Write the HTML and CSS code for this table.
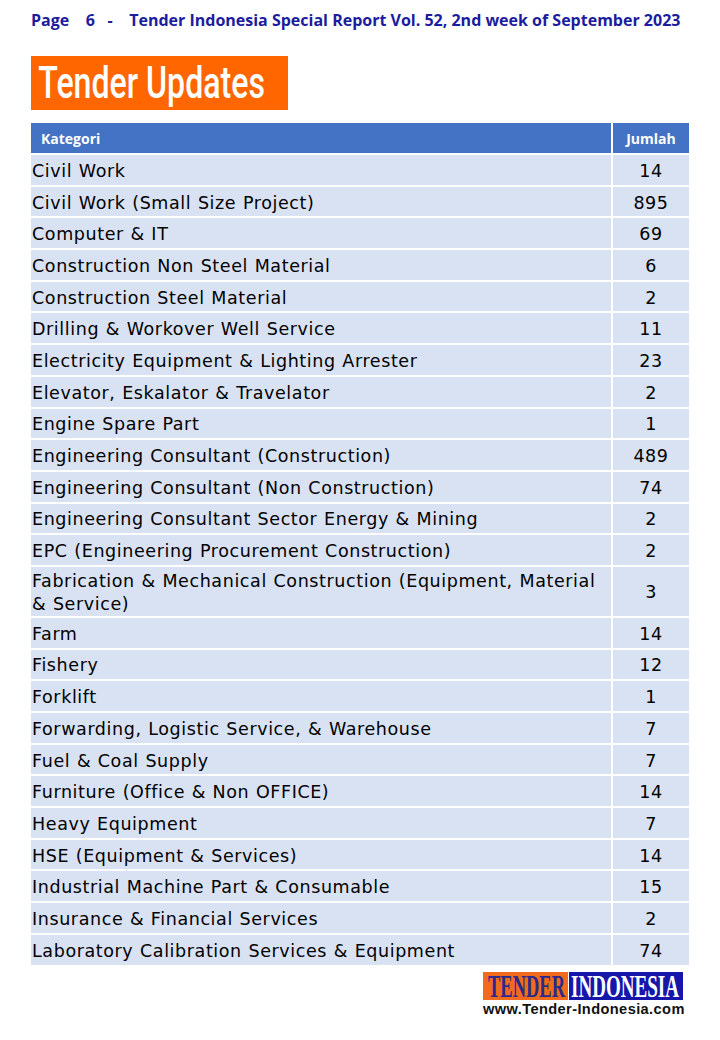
FILE: index.html
```html
<!DOCTYPE html>
<html>
<head>
<meta charset="utf-8">
<link rel="stylesheet" href="styles.css">
</head>
<body>
<div class="page">
  <div class="running-head">Page    6   -    Tender Indonesia Special Report Vol. 52, 2nd week of September 2023</div>
  <div class="title-box"><span class="title">Tender Updates</span></div>
  <table class="tbl">
    <thead>
      <tr><th class="cat">Kategori</th><th class="num">Jumlah</th></tr>
    </thead>
    <tbody>
      <tr><td>Civil Work</td><td class="n">14</td></tr>
      <tr><td>Civil Work (Small Size Project)</td><td class="n">895</td></tr>
      <tr><td>Computer &amp; IT</td><td class="n">69</td></tr>
      <tr><td>Construction Non Steel Material</td><td class="n">6</td></tr>
      <tr><td>Construction Steel Material</td><td class="n">2</td></tr>
      <tr><td>Drilling &amp; Workover Well Service</td><td class="n">11</td></tr>
      <tr><td>Electricity Equipment &amp; Lighting Arrester</td><td class="n">23</td></tr>
      <tr><td>Elevator, Eskalator &amp; Travelator</td><td class="n">2</td></tr>
      <tr><td>Engine Spare Part</td><td class="n">1</td></tr>
      <tr><td>Engineering Consultant (Construction)</td><td class="n">489</td></tr>
      <tr><td>Engineering Consultant (Non Construction)</td><td class="n">74</td></tr>
      <tr><td>Engineering Consultant Sector Energy &amp; Mining</td><td class="n">2</td></tr>
      <tr><td>EPC (Engineering Procurement Construction)</td><td class="n">2</td></tr>
      <tr class="tall"><td>Fabrication &amp; Mechanical Construction (Equipment, Material &amp; Service)</td><td class="n">3</td></tr>
      <tr><td>Farm</td><td class="n">14</td></tr>
      <tr><td>Fishery</td><td class="n">12</td></tr>
      <tr><td>Forklift</td><td class="n">1</td></tr>
      <tr><td>Forwarding, Logistic Service, &amp; Warehouse</td><td class="n">7</td></tr>
      <tr><td>Fuel &amp; Coal Supply</td><td class="n">7</td></tr>
      <tr><td>Furniture (Office &amp; Non OFFICE)</td><td class="n">14</td></tr>
      <tr><td>Heavy Equipment</td><td class="n">7</td></tr>
      <tr><td>HSE (Equipment &amp; Services)</td><td class="n">14</td></tr>
      <tr><td>Industrial Machine Part &amp; Consumable</td><td class="n">15</td></tr>
      <tr><td>Insurance &amp; Financial Services</td><td class="n">2</td></tr>
      <tr><td>Laboratory Calibration Services &amp; Equipment</td><td class="n">74</td></tr>
    </tbody>
  </table>
  <div class="footer">
    <div class="logo">
      <svg class="logo-mark" width="200" height="28" viewBox="0 0 200 28">
        <rect x="0" y="0" width="85" height="28" fill="#f26b1d"/>
        <rect x="86" y="0" width="114" height="28" fill="#1616aa"/>
        <text transform="translate(5,25) scale(1,1.73)" x="0" y="0" textLength="77" lengthAdjust="spacingAndGlyphs" font-family="Liberation Serif, serif" font-weight="700" font-size="18.5" fill="#2a2a8c">TENDER</text>
        <text transform="translate(88,25) scale(1,1.68)" x="0" y="0" textLength="108" lengthAdjust="spacingAndGlyphs" font-family="Liberation Serif, serif" font-weight="700" font-size="19" fill="#ffffff">INDONESIA</text>
      </svg>
      <div class="lg-url">www.Tender-Indonesia.com</div>
    </div>
  </div>
</div>
</body>
</html>
```

FILE: styles.css
```css
html, body {
  margin: 0;
  padding: 0;
  background: #ffffff;
}
.page {
  width: 720px;
  height: 1040px;
  padding: 9px 31px 0 31px;
  box-sizing: border-box;
}
.running-head {
  font-family: "Open Sans", "Liberation Sans", sans-serif;
  font-weight: 700;
  font-size: 16px;
  color: #1c1c9e;
  white-space: pre;
  height: 22px;
  line-height: 22px;
}
.title-box {
  margin-top: 25px;
  width: 257px;
  height: 54px;
  background: #ff6600;
  overflow: hidden;
}
.title {
  display: inline-block;
  font-family: "Roboto", "DejaVu Sans", sans-serif;
  font-weight: 500;
  font-size: 44px;
  line-height: 54px;
  color: #ffffff;
  padding-left: 10px;
  transform: scaleX(0.73);
  transform-origin: left center;
  white-space: nowrap;
}
.tbl {
  margin-top: 13px;
  width: 658px;
  border-collapse: collapse;
  font-family: "DejaVu Sans", Verdana, sans-serif;
}
.tbl th {
  background: #4472c4;
  color: #ffffff;
  font-family: "Open Sans", "Liberation Sans", sans-serif;
  font-weight: 700;
  font-size: 14px;
  height: 30px;
  padding: 0;
  border: 2px solid #ffffff;
  border-top: 0;
}
.tbl th.cat {
  text-align: left;
  padding-left: 10px;
  border-left: 0;
}
.tbl th.num {
  width: 76px;
  text-align: center;
  border-right: 0;
}
.tbl td {
  background: #d9e2f3;
  color: #000000;
  font-size: 17.5px;
  height: 26.7px;
  line-height: 23px;
  padding: 3px 0 0 1px;
  border: 2px solid #ffffff;
  letter-spacing: 0.6px;
  word-spacing: 0.5px;
}
.tbl td:first-child {
  border-left: 0;
}
.tbl td.n {
  text-align: center;
  border-right: 0;
  padding: 3px 0 0 0;
}
.tbl tr.tall td {
  height: 46px;
}
.tbl tbody tr:last-child td {
  border-bottom: 0;
}
.footer {
  display: flex;
  justify-content: flex-end;
  margin-top: 7px;
  padding-right: 3px;
}
.logo {
  width: 203px;
  display: flex;
  flex-direction: column;
  align-items: flex-start;
}
.logo-mark {
  display: block;
}
.lg-url {
  font-family: "Liberation Sans", Arial, sans-serif;
  font-weight: 700;
  font-size: 14.6px;
  color: #111111;
  margin-top: 1px;
  letter-spacing: 0.4px;
  white-space: nowrap;
}
```
